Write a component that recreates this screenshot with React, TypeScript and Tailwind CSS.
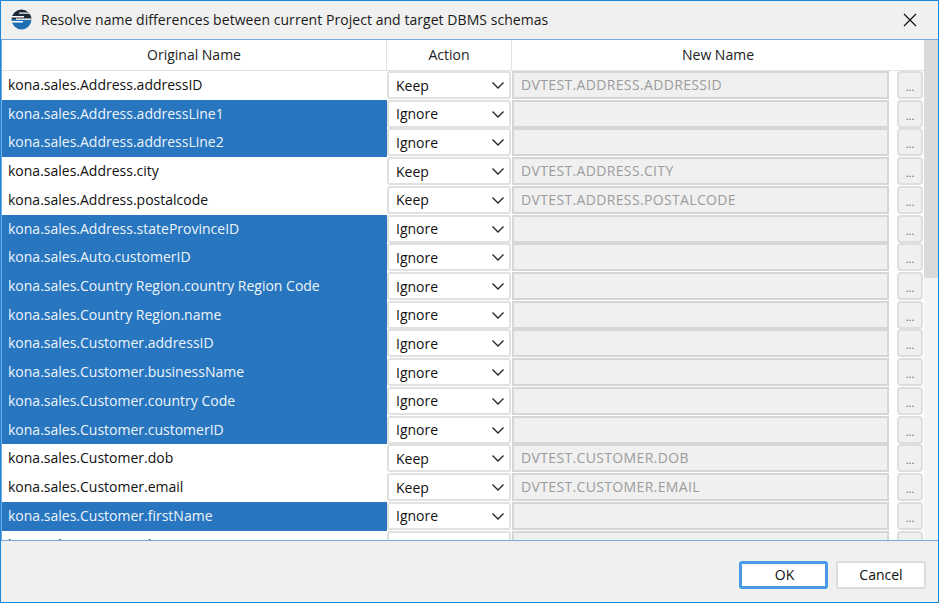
const rows: [string, string, string][] = [
  ['kona.sales.Address.addressID', 'Keep', 'DVTEST.ADDRESS.ADDRESSID'],
  ['kona.sales.Address.addressLine1', 'Ignore', ''],
  ['kona.sales.Address.addressLine2', 'Ignore', ''],
  ['kona.sales.Address.city', 'Keep', 'DVTEST.ADDRESS.CITY'],
  ['kona.sales.Address.postalcode', 'Keep', 'DVTEST.ADDRESS.POSTALCODE'],
  ['kona.sales.Address.stateProvinceID', 'Ignore', ''],
  ['kona.sales.Auto.customerID', 'Ignore', ''],
  ['kona.sales.Country Region.country Region Code', 'Ignore', ''],
  ['kona.sales.Country Region.name', 'Ignore', ''],
  ['kona.sales.Customer.addressID', 'Ignore', ''],
  ['kona.sales.Customer.businessName', 'Ignore', ''],
  ['kona.sales.Customer.country Code', 'Ignore', ''],
  ['kona.sales.Customer.customerID', 'Ignore', ''],
  ['kona.sales.Customer.dob', 'Keep', 'DVTEST.CUSTOMER.DOB'],
  ['kona.sales.Customer.email', 'Keep', 'DVTEST.CUSTOMER.EMAIL'],
  ['kona.sales.Customer.firstName', 'Ignore', ''],
  ['kona.sales.Customer.lastName', 'Keep', 'DVTEST.CUSTOMER.LASTNAME'],
]

function Logo() {
  return (
    <svg width="21" height="21" viewBox="0 0 21 21">
      <defs>
        <clipPath id="disc">
          <circle cx="10.5" cy="10.5" r="10" />
        </clipPath>
      </defs>
      <g clipPath="url(#disc)">
        <rect width="21" height="10" fill="#1f2a38" />
        <rect y="10" width="21" height="11" fill="#1f6fb2" />
        <rect x="8" y="3.5" width="13" height="1.2" fill="#ffffff" />
        <rect x="0" y="7" width="13" height="1.5" fill="#ffffff" />
        <rect x="5" y="9.5" width="16" height="1.3" fill="#ffffff" />
        <rect x="0" y="12" width="12" height="1.5" fill="#ffffff" />
      </g>
    </svg>
  )
}

function Row({ name, action, target }: { name: string; action: string; target: string }) {
  const ignored = action === 'Ignore'
  return (
    <div className="flex h-[28.73px] shrink-0">
      <div className={`w-[385px] shrink-0 pl-[6px] leading-[28.84px] whitespace-nowrap overflow-hidden ${ignored ? 'bg-[#2776bf] text-[#eef4fa]' : 'bg-white text-[#111111]'}`}>
        {name}
      </div>
      <div className="w-[125px] shrink-0 pr-px">
        <div className="h-[28px] rounded-[3px] border-2 border-[#e1e1e1] bg-white flex items-center justify-between pl-[7px] pr-[4px] text-[#111111]">
          <span>{action}</span>
          <svg width="14" height="14" viewBox="0 0 14 14" fill="none" stroke="#222222" strokeWidth="1.3">
            <path d="M1.5 4.5 7 10l5.5-5.5" />
          </svg>
        </div>
      </div>
      <div className="w-[378px] shrink-0 pr-px">
        <div className="h-[28px] border-2 border-[#d6d6d6] bg-[#f0f0f0] pl-[7px] leading-[24px] tracking-[0.35px] text-[#9c9c9c] whitespace-nowrap overflow-hidden">
          {target}
        </div>
      </div>
      <div className="w-[33px] shrink-0 pl-[7px]">
        <div className="w-[26px] h-[28px] rounded-[4px] border-2 border-[#dedede] bg-[#f0f0f0] flex items-end justify-center pb-[5px] text-[11px] leading-[11px] text-[#666666]">
          ...
        </div>
      </div>
    </div>
  )
}

export default function App() {
  return (
    <div className="w-[939px] h-[603px] bg-[#f0f0f0] border border-[#1c87d9] flex flex-col overflow-hidden text-[14px] font-['Open_Sans','Noto_Sans',sans-serif]">
      <div className="h-[38px] shrink-0 flex items-center pl-[10px] pr-[21px] pb-px text-[#1a1a1a]">
        <Logo />
        <span className="ml-[9px] text-[14px] tracking-[0.05px]">Resolve name differences between current Project and target DBMS schemas</span>
        <svg className="ml-auto" width="14" height="14" viewBox="0 0 14 14" stroke="#111111" strokeWidth="1.2">
          <path d="M1 1l12 12M13 1 1 13" />
        </svg>
      </div>
      <div className="h-[502px] shrink-0 border-y border-[#78a9dc] flex overflow-hidden bg-white">
        <div className="flex-1 flex flex-col min-w-0 border-l border-[#78a9dc]">
          <div className="h-[31px] shrink-0 flex border-b border-[#e3e3e3] text-center text-[#222222] leading-[30px]">
            <div className="w-[385px] border-r border-[#e3e3e3]">Original Name</div>
            <div className="w-[125px] border-r border-[#e3e3e3]">Action</div>
            <div className="flex-1">New Name</div>
          </div>
          {rows.map((r) => (
            <Row key={r[0]} name={r[0]} action={r[1]} target={r[2]} />
          ))}
        </div>
        <div className="w-[14px] shrink-0 bg-[#f4f4f4] flex flex-col">
          <div className="h-[238px] bg-[#dadada]" />
        </div>
      </div>
      <div className="flex-1 flex items-center justify-end gap-[8px] pr-[12px] pt-[7px] text-[#111111]">
        <button className="w-[89px] h-[28px] pl-[2px] rounded-[3px] border-[3px] border-[#4a9ae8] bg-white leading-none">OK</button>
        <button className="w-[90px] h-[28px] rounded-[3px] border-2 border-[#dcdcdc] bg-white leading-none">Cancel</button>
      </div>
    </div>
  )
}
